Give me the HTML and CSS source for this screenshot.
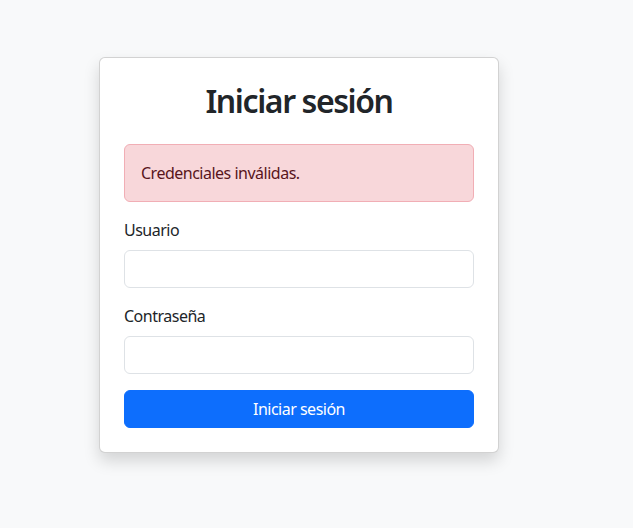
FILE: index.html
```html
<!DOCTYPE html>
<html lang="es">
<head>
<meta charset="utf-8">
<title>Iniciar sesión</title>
<link rel="stylesheet" href="styles.css">
</head>
<body>
<main class="page">
  <div class="card">
    <div class="card-body">
      <h2 class="title">Iniciar sesión</h2>
      <div class="alert">Credenciales inválidas.</div>
      <form class="form">
        <div class="field">
          <label class="label" for="usuario">Usuario</label>
          <input class="input" id="usuario" type="text">
        </div>
        <div class="field">
          <label class="label" for="pass">Contraseña</label>
          <input class="input" id="pass" type="password">
        </div>
        <button class="btn" type="button">Iniciar sesión</button>
      </form>
    </div>
  </div>
</main>
</body>
</html>
```
FILE: styles.css
```css
* { box-sizing: border-box; }
body {
  margin: 0;
  min-height: 100vh;
  background: #f8f9fa;
  font-family: "Noto Sans", "Open Sans", sans-serif;
  font-size: 16px;
  line-height: 1.5;
  letter-spacing: -0.5px;
  color: #212529;
}
.page {
  padding: 57px 0 0 99px;
}
.card {
  width: 400px;
  background: #fff;
  border: 1px solid rgba(0,0,0,.175);
  border-radius: 6px;
  box-shadow: 0 .5rem 1rem rgba(0,0,0,.15);
}
.card-body {
  padding: 24px;
}
.title {
  margin: 0 0 24px;
  font-size: 32px;
  font-weight: 600;
  line-height: 1.2;
  letter-spacing: -1.4px;
  text-align: center;
}
.alert {
  padding: 16px;
  margin-bottom: 16px;
  color: #58151c;
  background: #f8d7da;
  border: 1px solid #f1aeb5;
  border-radius: 6px;
}
.form { margin: 0; }
.field { margin-bottom: 16px; }
.label {
  display: block;
  margin-bottom: 8px;
}
.input {
  display: block;
  width: 100%;
  height: 38px;
  padding: 6px 12px;
  font: inherit;
  border: 1px solid #dee2e6;
  border-radius: 6px;
  background: #fff;
}
.btn {
  display: block;
  width: 100%;
  height: 38px;
  padding: 6px 12px;
  font: inherit;
  letter-spacing: -0.5px;
  color: #fff;
  background: #0d6efd;
  border: 1px solid #0d6efd;
  border-radius: 6px;
}
```
